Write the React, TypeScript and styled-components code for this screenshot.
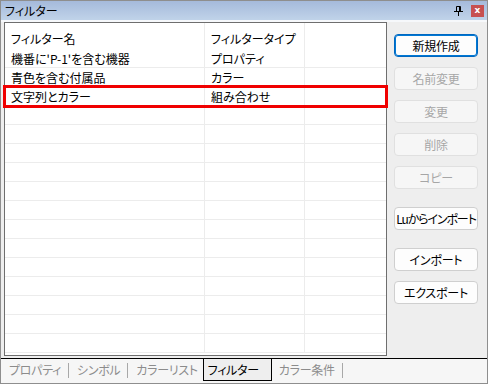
import styled, { createGlobalStyle } from 'styled-components';

const GlobalStyle = createGlobalStyle`
  body {
    margin: 0;
    background: #ffffff;
    font-family: "Noto Sans CJK JP", "Noto Sans", sans-serif;
    font-feature-settings: "palt";
    font-size: 12px;
    color: #000;
  }
`;

const rows = [
  { name: "機番に'P-1'を含む機器", type: 'プロパティ' },
  { name: '青色を含む付属品', type: 'カラー' },
  { name: '文字列とカラー', type: '組み合わせ', marked: true },
];
const ROW_COUNT = 16;

const buttons = [
  { label: '新規作成', primary: true },
  { label: '名前変更', disabled: true },
  { label: '変更', disabled: true },
  { label: '削除', disabled: true },
  { label: 'コピー', disabled: true },
  { label: 'Luからインポート', spaced: true, tight: true },
  { label: 'インポート', spaced: true },
  { label: 'エクスポート' },
];

const tabs = [
  { label: 'プロパティ', sep: true },
  { label: 'シンボル', sep: true },
  { label: 'カラーリスト' },
  { label: 'フィルター', active: true },
  { label: 'カラー条件', sep: true },
];

const PinIcon = () => (
  <svg width='9' height='10' viewBox='0 0 9 10'>
    <path d='M2.5 0.5h4v5h-4z' fill='none' stroke='#000' />
    <path d='M5 1v4h1V1z' fill='#000' />
    <path d='M0 5.5h9' stroke='#000' />
    <path d='M4.5 6v4' stroke='#000' />
  </svg>
);

const App = () => {
  const cells = Array.from({ length: ROW_COUNT }, (_, i) => rows[i] || { name: '', type: '' });

  return (
    <>
      <GlobalStyle />
      <Window>
        <TitleBar>
          <Title>フィルター</Title>
          <TitleTools>
            <PinIcon />
            <CloseBox>x</CloseBox>
          </TitleTools>
        </TitleBar>
        <Body>
          <Grid>
            <HeaderRow>
              <HeaderCell>フィルター名</HeaderCell>
              <HeaderCell>フィルタータイプ</HeaderCell>
              <HeaderCell />
            </HeaderRow>
            {cells.map((r, i) => (
              <Row key={i} $marked={'marked' in r && !!r.marked}>
                <Cell>{r.name}</Cell>
                <Cell>{r.type}</Cell>
                <Cell />
              </Row>
            ))}
          </Grid>
          <ButtonPanel>
            {buttons.map((b) => (
              <Button
                key={b.label}
                disabled={!!b.disabled}
                $primary={!!b.primary}
                $spaced={!!b.spaced}
                $tight={!!b.tight}
              >
                {b.label}
              </Button>
            ))}
          </ButtonPanel>
        </Body>
        <TabStrip>
          {tabs.map((t) => (
            <Tab key={t.label} $active={!!t.active} $sep={!!t.sep}>
              {t.label}
            </Tab>
          ))}
        </TabStrip>
      </Window>
    </>
  );
};

export default App;

const Window = styled.div`
  width: 488px;
  height: 384px;
  box-sizing: border-box;
  border: 1px solid #8e8e8e;
  background: #eeeeee;
  display: flex;
  flex-direction: column;
`;

const TitleBar = styled.div`
  height: 19px;
  flex-shrink: 0;
  background: linear-gradient(#a5badb, #c0d3e9);
  border-bottom: 2px solid #f6f8fb;
  display: flex;
  align-items: center;
  justify-content: space-between;
  padding: 0 3px 0 4px;
`;

const Title = styled.div`
  font-size: 12px;
  line-height: 19px;
`;

const TitleTools = styled.div`
  display: flex;
  align-items: center;
  gap: 8px;
  svg {
    margin-top: 1px;
  }
`;

const CloseBox = styled.div`
  width: 13px;
  height: 12px;
  background: #c75050;
  color: #fff;
  font-family: "DejaVu Sans", sans-serif;
  font-size: 9px;
  font-weight: bold;
  line-height: 11px;
  text-align: center;
`;

const Body = styled.div`
  flex: 1;
  display: flex;
  padding-left: 3px;
  min-height: 0;
`;

const Grid = styled.div`
  width: 383px;
  height: 334px;
  box-sizing: border-box;
  border: 1px solid #6e6e6e;
  background: #fff;
  flex-shrink: 0;
`;

const HeaderRow = styled.div`
  display: grid;
  grid-template-columns: 200px 100px 1fr;
  height: 26px;
`;

const HeaderCell = styled.div`
  padding: 4px 0 0 6px;
  display: flex;
  align-items: center;
  border-right: 1px solid #ececec;
  &:last-child {
    border-right: none;
  }
`;

const Row = styled.div<{ $marked: boolean }>`
  display: grid;
  grid-template-columns: 200px 100px 1fr;
  height: 19px;
  box-sizing: border-box;
  border-bottom: 1px solid #ececec;
  ${({ $marked }) =>
    $marked &&
    `
    position: relative;
    z-index: 1;
    outline: 3px solid #f00000;
    outline-offset: -1px;
  `}
`;

const Cell = styled.div`
  padding: 1px 0 0 6px;
  line-height: 18px;
  white-space: nowrap;
  border-right: 1px solid #ececec;
  &:last-child {
    border-right: none;
  }
`;

const ButtonPanel = styled.div`
  display: flex;
  flex-direction: column;
  padding: 12px 0 0 7px;
`;

const Button = styled.button<{ $primary: boolean; $spaced: boolean; $tight: boolean }>`
  width: 84px;
  height: 23px;
  margin-top: ${({ $spaced }) => ($spaced ? '18px' : '10px')};
  &:first-child {
    margin-top: 0;
  }
  padding: 0;
  box-sizing: border-box;
  white-space: nowrap;
  letter-spacing: ${({ $tight }) => ($tight ? '-1.1px' : '-0.2px')};
  font-family: inherit;
  font-feature-settings: "palt";
  font-size: 12px;
  color: #000;
  background: #fdfdfd;
  border: 1px solid ${({ $primary }) => ($primary ? '#0067c0' : '#cfcfcf')};
  box-shadow: ${({ $primary }) => ($primary ? 'inset 0 0 0 1px #0078d4' : 'none')};
  border-radius: 4px;
  &:disabled {
    color: #a6a6a6;
    background: #f6f6f6;
    border-color: #e0e0e0;
  }
`;

const TabStrip = styled.div`
  height: 25px;
  flex-shrink: 0;
  box-sizing: border-box;
  border-top: 1px solid #000;
  background: #f6f6f6;
  display: flex;
  align-items: flex-start;
  padding-left: 1px;
`;

const Tab = styled.div<{ $active: boolean; $sep: boolean }>`
  position: relative;
  height: 22px;
  box-sizing: border-box;
  padding: 0 ${({ $active, $sep }) => ($active ? '12px' : $sep ? '8px' : '4px')} 0
    ${({ $active }) => ($active ? '4px' : '6px')};
  line-height: 21px;
  font-size: 12px;
  letter-spacing: -0.3px;
  color: ${({ $active }) => ($active ? '#000' : '#8c8c8c')};
  background: ${({ $active }) => ($active ? '#eeeeee' : 'transparent')};
  border: 1px solid ${({ $active }) => ($active ? '#000' : 'transparent')};
  border-top: none;
  &::after {
    content: '';
    display: ${({ $sep }) => ($sep ? 'block' : 'none')};
    position: absolute;
    right: 0;
    top: 4px;
    height: 15px;
    border-left: 1px solid #a8a8a8;
  }
`;
